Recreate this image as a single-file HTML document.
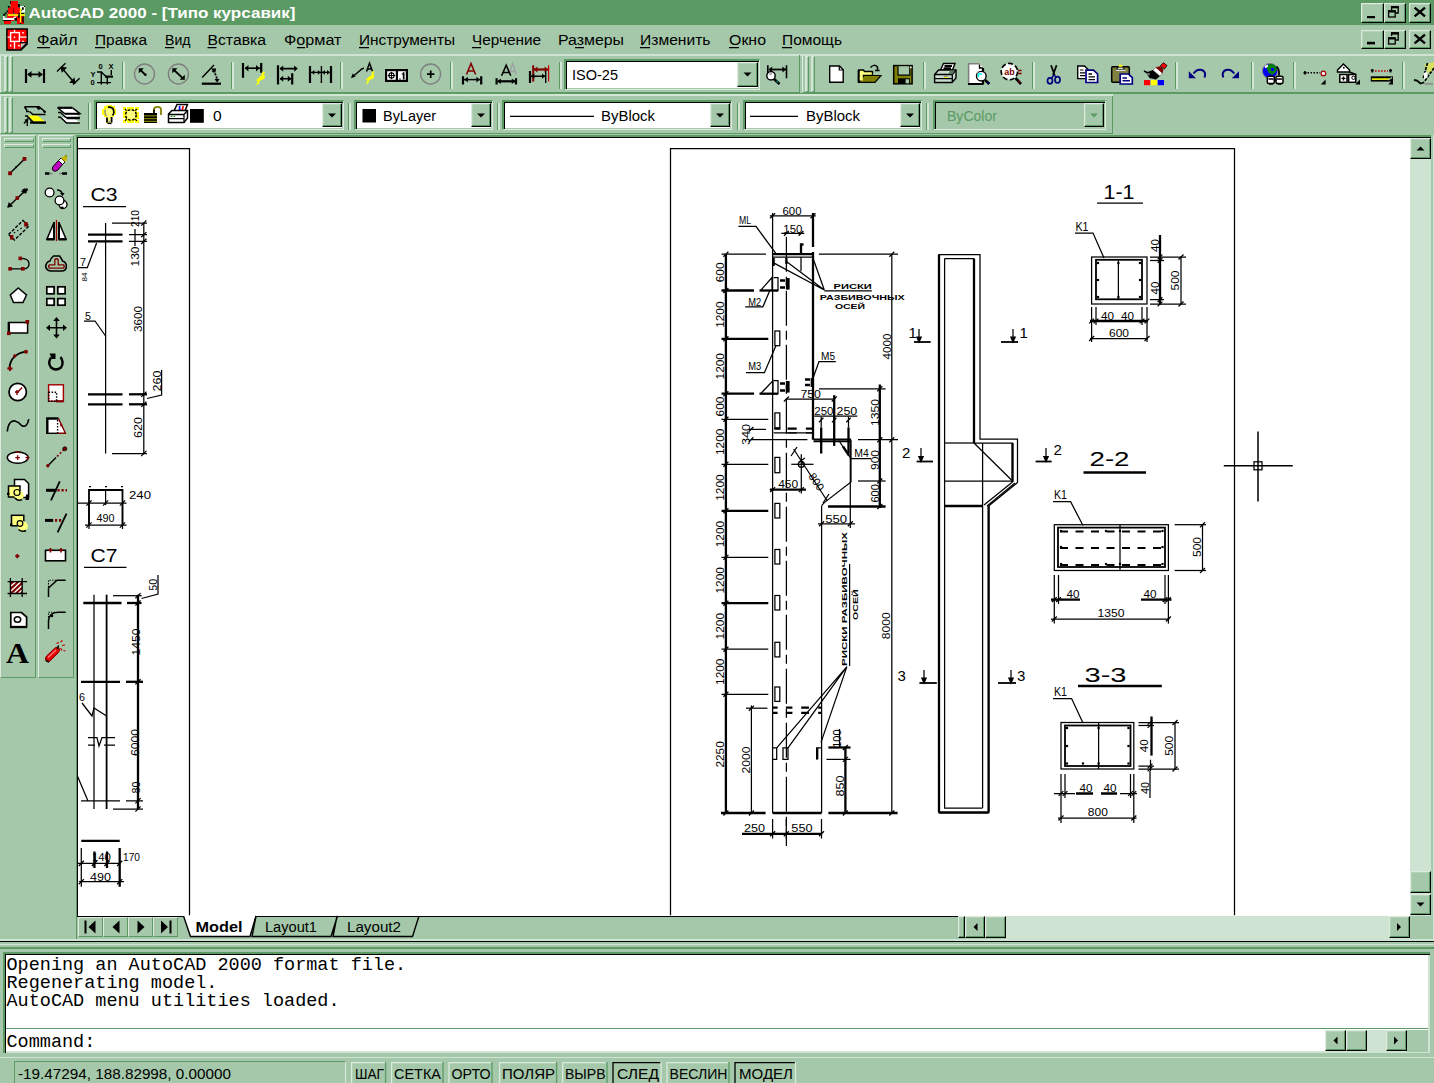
<!DOCTYPE html>
<html lang="ru">
<head>
<meta charset="utf-8">
<title>AutoCAD 2000 - [Типо курсавик]</title>
<style>
html,body{margin:0;padding:0}
body{width:1434px;height:1083px;overflow:hidden;position:relative;background:#a4c8a9;font-family:"Liberation Sans",sans-serif;font-size:15.5px;color:#000}
.abs{position:absolute}
.btn{position:absolute;background:#a4c8a9;box-sizing:border-box;border:1px solid;border-color:#dcebde #000 #000 #dcebde;box-shadow:inset -1px -1px 0 #5c9a64,inset 1px 1px 0 #b4d2b8}
.sunk{position:absolute;box-sizing:border-box;border:1px solid;border-width:2px 1px 1px 2px;border-color:#5c9a64 #dcebde #dcebde #5c9a64;box-shadow:inset 1px 1px 0 #000,inset -1px -1px 0 #a4c8a9}
.tb{position:absolute;box-sizing:border-box;border-top:1px solid #dcebde;border-left:1px solid #dcebde;border-bottom:1px solid #5c9a64;border-right:1px solid #5c9a64}
.grip{position:absolute;width:4px;box-sizing:border-box;border-left:2px solid #d3e6d6;border-top:1px solid #dcebde;border-right:1px solid #5c9a64;border-bottom:1px solid #5c9a64;background:#a4c8a9}
.hgrip{position:absolute;height:3px;box-sizing:border-box;border-left:1px solid #dcebde;border-top:1px solid #dcebde;border-right:1px solid #5c9a64;border-bottom:1px solid #5c9a64;background:#a4c8a9}
.sep{position:absolute;width:3px;box-sizing:border-box;border-left:1px solid #5c9a64;border-right:2px solid #d3e6d6}
svg{position:absolute;left:0;top:0;overflow:visible}
svg text{font-family:"Liberation Sans",sans-serif}
.ui text{font-size:15.5px;fill:#000}
.mono{font-family:"Liberation Mono",monospace;font-size:18.5px;line-height:18px;white-space:pre;color:#000}
</style>
</head>
<body>
<!-- title bar -->
<div class="abs" style="left:0;top:0;width:1434px;height:25px;background:#5b9a63"></div>
<div class="btn" style="left:1361px;top:3px;width:23px;height:20px"></div>
<div class="btn" style="left:1384px;top:3px;width:22px;height:20px"></div>
<div class="btn" style="left:1409px;top:3px;width:22px;height:20px"></div>
<div class="btn" style="left:1361px;top:30px;width:23px;height:19px"></div>
<div class="btn" style="left:1384px;top:30px;width:22px;height:19px"></div>
<div class="btn" style="left:1409px;top:30px;width:22px;height:19px"></div>
<!-- menu bottom edge -->
<div class="abs" style="left:0;top:54px;width:1434px;height:1.5px;background:#cfe3d2"></div>
<!-- toolbar row 1 -->
<div class="tb" style="left:0;top:55px;width:800px;height:38px;border-top:none"></div>
<div class="tb" style="left:802px;top:55px;width:640px;height:38px;border-top:none"></div>
<div class="abs" style="left:0;top:93px;width:1434px;height:1px;background:#5c9a64"></div>
<div class="abs" style="left:0;top:94px;width:1113px;height:2px;background:#d3e6d6"></div>
<!-- toolbar row 2 -->
<div class="tb" style="left:0;top:96px;width:1113px;height:38px;border-top:none"></div>
<div class="abs" style="left:0;top:134px;width:1434px;height:1px;background:#a4c8a9"></div>
<!-- grips -->
<div class="grip" style="left:4px;top:56px;height:36px"></div>
<div class="grip" style="left:9px;top:56px;height:36px"></div>
<div class="grip" style="left:805px;top:56px;height:36px"></div>
<div class="grip" style="left:810.500px;top:56px;height:36px"></div>
<div class="grip" style="left:4px;top:97px;height:36px"></div>
<div class="grip" style="left:9px;top:97px;height:36px"></div>
<!-- title + menu text -->
<svg class="ui" width="1434" height="56" viewBox="0 0 1434 56">
<text x="28.5" y="17.5" textLength="267" lengthAdjust="spacingAndGlyphs" style="font-weight:bold;fill:#fff;font-size:15.5px">AutoCAD 2000 - [Типо курсавик]</text>
<g id="menu">
<text x="37" y="45" textLength="40.5" lengthAdjust="spacingAndGlyphs">Файл</text>
<text x="95" y="45" textLength="52" lengthAdjust="spacingAndGlyphs">Правка</text>
<text x="165" y="45" textLength="25.5" lengthAdjust="spacingAndGlyphs">Вид</text>
<text x="207.5" y="45" textLength="58.5" lengthAdjust="spacingAndGlyphs">Вставка</text>
<text x="284" y="45" textLength="57.5" lengthAdjust="spacingAndGlyphs">Формат</text>
<text x="359" y="45" textLength="96" lengthAdjust="spacingAndGlyphs">Инструменты</text>
<text x="472" y="45" textLength="69" lengthAdjust="spacingAndGlyphs">Черчение</text>
<text x="558" y="45" textLength="66" lengthAdjust="spacingAndGlyphs">Размеры</text>
<text x="640" y="45" textLength="70.5" lengthAdjust="spacingAndGlyphs">Изменить</text>
<text x="729" y="45" textLength="37" lengthAdjust="spacingAndGlyphs">Окно</text>
<text x="782" y="45" textLength="60" lengthAdjust="spacingAndGlyphs">Помощь</text>
</g>
<g stroke="#000" stroke-width="1.2" fill="none">
<path d="M37 47.6h13M95 47.6h10M165 47.6h9M207.5 47.6h9M297 47.6h8M359 47.6h10M472 47.6h9M575 47.6h9M640 47.6h10M729 47.6h10M782 47.6h10"/>
</g>
</svg>
<!-- app icons -->
<svg width="40" height="56" viewBox="0 0 40 56">
<g>
<path d="M10.600 1H18V7.400H19.900V24H17V18H14.600V20.900H11V24H4V20.900H7.200V13.700H7.900V7.400H10.600Z" fill="#f00"/>
<path d="M14.600 18H17V24H14.600Z M11 20.900h3.600v3.100h-3.600z" fill="#5b9a63"/>
<path d="M10 1h0.900v2.800h-0.900zM7.900 6h1.800v1.700h-1.800zM6.500 10.500h1.400v1.800h-1.400zM4.600 12.500h2v1.400h-2zM3.100 14h2.200v1.800h-2.200zM18 4h1.900v3.300h-1.900z" fill="#000"/>
<rect x="13.200" y="8.400" width="0.700" height="4.800" fill="#400"/><rect x="13.200" y="13" width="1.600" height="0.900" fill="#08a"/>
<path d="M20.200 6H25V12.500H21.200V8.500H20.200Z" fill="#fff"/><path d="M22 7.200h1.800v2.600h-1.800zM24 6h1v0.900h-1zM21.200 9.800h1v1h-1z" fill="#000"/>
<rect x="19.900" y="15.800" width="4.100" height="8.200" fill="#f00"/>
<rect x="18.200" y="13" width="5.800" height="1.200" fill="#000"/>
<rect x="7.900" y="14.200" width="17.100" height="1.650" fill="#ff0"/>
<rect x="18.200" y="14.200" width="1.700" height="3.800" fill="#000"/><rect x="22.300" y="16.500" width="1.500" height="6.100" fill="#000"/>
<path d="M3.100 16H4.500V18H13L14.600 16.400H16.800L14 19.900H3.100Z" fill="#fff"/>
<path d="M3.100 19.900h7.900v1h-7.900zM14 18.200l3 -0.800v3.400h-1.800z" fill="#000"/>
<rect x="19.900" y="7.900" width="1.250" height="14.900" fill="#ff0"/><rect x="19.900" y="22.800" width="1.250" height="1.200" fill="#000"/>
<rect x="4.300" y="21.400" width="1.400" height="1.300" fill="#a00"/>
</g>
<g>
<path d="M6.9 28.9 H27.2 V44 L21 49.9 H6.9 Z" fill="#f00" stroke="#000" stroke-width="1.5"/>
<path d="M20.8 43.2 H27 L21 49 Z" fill="#c4c4c4"/>
<path d="M20.4 43.6 V42.6 H27.6" stroke="#000" stroke-width="1.4" fill="none"/>
<path d="M21 49 L26.6 43.6" stroke="#000" stroke-width="1.4"/>
<path d="M7.6 37.2 H26.6 M14.5 29.8 V48.8" stroke="#fff" stroke-width="1.3"/>
<rect x="10.6" y="32.6" width="8.8" height="8.8" fill="#f00" stroke="#fff" stroke-width="1.4"/>
<path d="M13.8 36.6h1.4v1.4h-1.4z M22.2 32h1.6v1.6h-1.6z M22.2 40.8h1.6v1.2h-1.6z M10 44.6h1.3v2h-1.3z M18.2 44.8h1.6v1.8h-1.6z" fill="#fff"/>
</g>
</svg>
<!-- caption button glyphs -->
<svg width="1434" height="56" viewBox="0 0 1434 56">
<g fill="#000">
<rect x="1367" y="16" width="8" height="2.2"/>
<rect x="1367" y="41.8" width="8" height="2.6"/>
</g>
<g fill="none" stroke="#000" stroke-width="1.3">
<path d="M1391.6 10 V6.8 H1398.2 V13 H1395.6"/><path d="M1391 7.2 H1398.8" stroke-width="2.2"/>
<rect x="1388.6" y="11" width="6.6" height="6"/><path d="M1388 11.4 H1395.8" stroke-width="2.2"/>
<path d="M1391.6 36 V32.8 H1398.2 V40 H1395.6"/><path d="M1391 33.4 H1398.8" stroke-width="2.4"/>
<rect x="1388.6" y="38" width="6.6" height="6"/><path d="M1388 38.4 H1395.8" stroke-width="2.2"/>
</g>
<g stroke="#000" stroke-width="2.4" fill="none">
<path d="M1414.6 7.6 L1425 16.4 M1425 7.6 L1414.6 16.4"/>
<path d="M1414.6 34.6 L1425 43.4 M1425 34.6 L1414.6 43.4"/>
</g>
</svg>
<!-- separators row1 -->
<div class="sep" style="left:122px;top:62px;height:27px"></div>
<div class="sep" style="left:231px;top:62px;height:27px"></div>
<div class="sep" style="left:340px;top:62px;height:27px"></div>
<div class="sep" style="left:450px;top:62px;height:27px"></div>
<div class="sep" style="left:559px;top:62px;height:27px"></div>
<div class="sep" style="left:923px;top:62px;height:27px"></div>
<div class="sep" style="left:1032px;top:62px;height:27px"></div>
<div class="sep" style="left:1175px;top:62px;height:27px"></div>
<div class="sep" style="left:1251px;top:62px;height:27px"></div>
<div class="sep" style="left:1293px;top:62px;height:27px"></div>
<div class="sep" style="left:1402px;top:62px;height:27px"></div>
<!-- separators row2 -->
<div class="sep" style="left:88px;top:103px;height:27px"></div>
<div class="sep" style="left:348px;top:103px;height:27px"></div>
<div class="sep" style="left:497px;top:103px;height:27px"></div>
<div class="sep" style="left:737px;top:103px;height:27px"></div>
<div class="sep" style="left:926px;top:103px;height:27px"></div>
<!-- combos -->
<div class="sunk" style="left:564px;top:59px;width:196px;height:31px;background:#fff"></div>
<div class="btn" style="left:737px;top:62px;width:21px;height:25px"></div>
<div class="sunk" style="left:94px;top:100px;width:250px;height:30px;background:#fff"></div>
<div class="btn" style="left:322px;top:103px;width:20px;height:24px"></div>
<div class="sunk" style="left:354px;top:100px;width:139px;height:30px;background:#fff"></div>
<div class="btn" style="left:471px;top:103px;width:20px;height:24px"></div>
<div class="sunk" style="left:502px;top:100px;width:230px;height:30px;background:#fff"></div>
<div class="btn" style="left:710px;top:103px;width:20px;height:24px"></div>
<div class="sunk" style="left:743px;top:100px;width:179px;height:30px;background:#fff"></div>
<div class="btn" style="left:900px;top:103px;width:20px;height:24px"></div>
<div class="sunk" style="left:933px;top:100px;width:173px;height:30px;background:#a4c8a9"></div>
<div class="btn" style="left:1084px;top:103px;width:20px;height:24px"></div>
<svg class="ui" width="1434" height="136" viewBox="0 0 1434 136">
<g fill="#000">
<path d="M743.5 72.5h8l-4 4z M328 113.5h8l-4 4z M477 113.5h8l-4 4z M716 113.5h8l-4 4z M906 113.5h8l-4 4z"/>
<path d="M1090 113.5h8l-4 4z" fill="#5c9a64"/>
</g>
<text x="572" y="80" textLength="46" lengthAdjust="spacingAndGlyphs">ISO-25</text>
<text x="213" y="121" >0</text>
<rect x="362.5" y="109" width="13.5" height="13.5" fill="#000"/>
<text x="383" y="121" textLength="53" lengthAdjust="spacingAndGlyphs">ByLayer</text>
<path d="M510 116.3H594 M750 116.3H798" stroke="#000" stroke-width="1.2"/>
<text x="601" y="121" textLength="54" lengthAdjust="spacingAndGlyphs">ByBlock</text>
<text x="806" y="121" textLength="54" lengthAdjust="spacingAndGlyphs">ByBlock</text>
<text x="947" y="121" textLength="50" lengthAdjust="spacingAndGlyphs" style="fill:#5c9a64">ByColor</text>
</svg>
<!-- left toolbars -->
<div class="tb" style="left:0;top:135px;width:36px;height:543px"></div>
<div class="tb" style="left:38px;top:135px;width:36px;height:543px"></div>
<div class="hgrip" style="left:4px;top:138px;width:30px;height:4px"></div>
<div class="hgrip" style="left:4px;top:144px;width:30px;height:4px"></div>
<div class="hgrip" style="left:42px;top:138px;width:29px;height:4px"></div>
<div class="hgrip" style="left:42px;top:144px;width:29px;height:4px"></div>
<!-- drawing area frame -->
<div class="abs" style="left:76px;top:135px;width:1356px;height:806px;background:#5c9a64"></div>
<div class="abs" style="left:77px;top:137px;width:1354px;height:780px;background:#000"></div>
<div class="abs" style="left:77px;top:917px;width:1354px;height:24px;background:#a4c8a9"></div>
<div class="abs" style="left:78px;top:138px;width:1332px;height:777.5px;background:#fff"></div>
<!-- vertical scrollbar -->
<div class="abs" style="left:1410px;top:138px;width:21px;height:778px;background:#cfe3d2"></div>
<div class="btn" style="left:1410px;top:138px;width:21px;height:21px"></div>
<div class="btn" style="left:1410px;top:871px;width:21px;height:22px"></div>
<div class="btn" style="left:1410px;top:894px;width:21px;height:21px"></div>
<!-- bottom strip: tabs + hscroll -->
<div class="abs" style="left:78px;top:916.5px;width:1353px;height:22.5px;background:#a4c8a9"></div>
<div class="abs" style="left:1006px;top:915.5px;width:404px;height:23px;background:#cfe3d2"></div>
<div class="abs" style="left:1410px;top:915.5px;width:22px;height:26px;background:#a4c8a9"></div>
<div class="abs" style="left:1431px;top:135px;width:3px;height:806px;background:#a4c8a9"></div>
<div class="abs" style="left:1432.5px;top:135px;width:1.5px;height:806px;background:#cfe3d2"></div>
<div class="btn" style="left:958px;top:916px;width:7px;height:22px"></div>
<div class="btn" style="left:965px;top:916px;width:20px;height:22px"></div>
<div class="btn" style="left:985px;top:916px;width:21px;height:22px"></div>
<div class="btn" style="left:1389px;top:916px;width:21px;height:22px"></div>
<div class="btn" style="left:78px;top:917px;width:25px;height:20px;border-color:#dcebde #5c9a64 #5c9a64 #dcebde;box-shadow:none"></div>
<div class="btn" style="left:103px;top:917px;width:25px;height:20px;border-color:#dcebde #5c9a64 #5c9a64 #dcebde;box-shadow:none"></div>
<div class="btn" style="left:128px;top:917px;width:25px;height:20px;border-color:#dcebde #5c9a64 #5c9a64 #dcebde;box-shadow:none"></div>
<div class="btn" style="left:153px;top:917px;width:25px;height:20px;border-color:#dcebde #5c9a64 #5c9a64 #dcebde;box-shadow:none"></div>
<!-- splitter -->
<div class="abs" style="left:0;top:939px;width:1434px;height:2.5px;background:#cfe3d2"></div>
<div class="abs" style="left:0;top:941.3px;width:1434px;height:1.2px;background:#000"></div>
<div class="abs" style="left:0;top:942.5px;width:1434px;height:4.5px;background:#a4c8a9"></div>
<div class="abs" style="left:0;top:943.5px;width:1434px;height:1.5px;background:#cfe3d2"></div>
<div class="abs" style="left:0;top:947px;width:1434px;height:1.5px;background:#5c9a64"></div>
<div class="abs" style="left:0;top:948.5px;width:1434px;height:3.5px;background:#a4c8a9"></div>
<!-- command window -->
<div class="abs" style="left:3px;top:952px;width:1427px;height:101px;background:#5c9a64"></div>
<div class="abs" style="left:4.5px;top:953.5px;width:1425.5px;height:99.5px;background:#000"></div>
<div class="abs" style="left:6px;top:955px;width:1424px;height:98px;background:#cfe3d2"></div>
<div class="abs" style="left:6px;top:955px;width:1422px;height:96px;background:#fff"></div>
<div class="abs" style="left:6px;top:1027.5px;width:1422px;height:1.3px;background:#5c9a64"></div>
<div class="abs mono" style="left:6.5px;top:957px">Opening an AutoCAD 2000 format file.
Regenerating model.
AutoCAD menu utilities loaded.</div>
<div class="abs mono" style="left:6.5px;top:1034px">Command:</div>
<!-- command hscroll -->
<div class="abs" style="left:1325px;top:1030px;width:82px;height:21.5px;background:#cfe3d2"></div>
<div class="abs" style="left:1407px;top:1030px;width:21px;height:21.5px;background:#a4c8a9"></div>
<div class="btn" style="left:1325px;top:1030px;width:21px;height:21px"></div>
<div class="btn" style="left:1346px;top:1030px;width:21px;height:21px"></div>
<div class="btn" style="left:1386px;top:1030px;width:21px;height:21px"></div>
<!-- status bar -->
<div class="abs" style="left:0;top:1056.5px;width:1434px;height:1.5px;background:#cfe3d2"></div>
<div class="abs" style="left:14px;top:1061px;width:332px;height:24px;box-sizing:border-box;border:1.3px solid;border-color:#5c9a64 #dcebde #dcebde #5c9a64"></div>
<!-- tabs, scroll arrows -->
<svg class="ui" width="1434" height="1083" viewBox="0 0 1434 1083">
<g fill="#000">
<path d="M84.5 920.5h2v13h-2z M95.5 920.5v13l-7 -6.5z"/>
<path d="M119.5 920.5v13l-7 -6.5z"/>
<path d="M137.5 920.5v13l7 -6.5z"/>
<path d="M161 920.5v13l7 -6.5z M169.5 920.5h2v13h-2z"/>
<path d="M1416.500 150.500h8l-4 -4z M1416.500 902.500h8l-4 4z"/>
<path d="M977.5 923v8l-4 -4z M1397 923v8l4 -4z M1337.500 1036.500v8l-4 -4z M1394 1036.500v8l4 -4z"/>
</g>
<!-- model tab -->
<path d="M183 916 L190.500 936.500 H250 L255.500 916 Z" fill="#fff"/>
<path d="M183.500 916 L190.500 936.500 H250 L256 916" fill="none" stroke="#000" stroke-width="1.4"/>
<path d="M256 916 L252 936.500 H331 L337.500 916 M337 916 L333 936.500 H412.500 L419 916" fill="none" stroke="#000" stroke-width="1.4"/>
<text x="195.500" y="932" textLength="47" lengthAdjust="spacingAndGlyphs" style="font-weight:bold">Model</text>
<text x="265" y="932" textLength="52" lengthAdjust="spacingAndGlyphs">Layout1</text>
<text x="347" y="932" textLength="54" lengthAdjust="spacingAndGlyphs">Layout2</text>
</svg>
<!-- drawing -->
<svg id="dwg" width="1434" height="1083" viewBox="0 0 1434 1083" style="clip-path:inset(138px 24px 167.5px 78px)">
<style>#dwg .t{stroke:#000;stroke-width:1.25;fill:none}#dwg .k{stroke:#000;stroke-width:2.3;fill:none}#dwg .m{stroke:#000;stroke-width:1.8;fill:none}#dwg .w{stroke:#000;stroke-width:1.25;fill:#fff}#dwg text{fill:#000;font-family:"Liberation Sans",sans-serif}</style>
<path class="t" d="M670.5 915.5V148.5H1234.5V915.5"/>
<path class="t" d="M78 148.5H189.5V915.5"/>
<text x="90.5" y="201" font-size="19" textLength="27" lengthAdjust="spacingAndGlyphs">C3</text>
<path class="t" d="M83 206.5L126 206.5"/>
<path class="t" d="M105.6 223L105.6 453.5"/>
<path class="t" d="M112 223L147 223"/>
<path class="k" d="M88 234.7L122.5 234.7"/>
<path class="k" d="M88 241.4L122.5 241.4"/>
<path class="t" d="M143.8 223L143.8 453.5"/>
<path class="t" d="M141.2 225.6L146.4 220.4"/>
<path class="t" d="M141.2 237.3L146.4 232.1"/>
<path class="t" d="M141.2 244L146.4 238.8"/>
<path class="t" d="M141.2 396.9L146.4 391.7"/>
<path class="t" d="M141.2 406.9L146.4 401.7"/>
<path class="t" d="M141.2 456.1L146.4 450.9"/>
<path class="t" d="M129 234.7L147 234.7"/>
<path class="t" d="M129 241.4L147 241.4"/>
<text x="139" y="227" font-size="10.5" textLength="17" lengthAdjust="spacingAndGlyphs" transform="rotate(-90 139 227)">210</text>
<text x="139" y="266.5" font-size="10.5" textLength="20" lengthAdjust="spacingAndGlyphs" transform="rotate(-90 139 266.5)">130</text>
<path class="t" d="M135 229L135 246"/>
<path class="t" d="M96.6 243L87.3 267.7H78"/>
<text x="80" y="266" font-size="10.5" textLength="6" lengthAdjust="spacingAndGlyphs">7</text>
<text x="87" y="281.5" font-size="8" textLength="9" lengthAdjust="spacingAndGlyphs" transform="rotate(-90 87 281.5)">84</text>
<text x="85" y="320" font-size="10.5" textLength="6" lengthAdjust="spacingAndGlyphs">5</text>
<path class="t" d="M84 321H95L105.6 336"/>
<text x="141.5" y="332" font-size="10.5" textLength="26" lengthAdjust="spacingAndGlyphs" transform="rotate(-90 141.5 332)">3600</text>
<path class="k" d="M88 394.3L122.5 394.3"/>
<path class="k" d="M88 404.3L122.5 404.3"/>
<path class="k" d="M129 394.3L147 394.3"/>
<path class="k" d="M129 404.3L147 404.3"/>
<text x="160.5" y="391.5" font-size="10.5" textLength="21" lengthAdjust="spacingAndGlyphs" transform="rotate(-90 160.5 391.5)">260</text>
<path class="t" d="M161.6 370V395L147 398.5"/>
<text x="141.5" y="438" font-size="10.5" textLength="21" lengthAdjust="spacingAndGlyphs" transform="rotate(-90 141.5 438)">620</text>
<path class="t" d="M112 453.5L147 453.5"/>
<path class="m" d="M89 525V490H122.5V525"/>
<path class="t" d="M105.6 490L105.6 505"/>
<path class="t" d="M78 503L126.5 503"/>
<path class="t" d="M85 525L126.5 525"/>
<path class="t" d="M86.4 505.6L91.6 500.4"/>
<path class="t" d="M103 505.6L108.2 500.4"/>
<path class="t" d="M119.9 505.6L125.1 500.4"/>
<path class="t" d="M86.4 527.6L91.6 522.4"/>
<path class="t" d="M119.9 527.6L125.1 522.4"/>
<text x="129" y="499" font-size="11" textLength="22" lengthAdjust="spacingAndGlyphs">240</text>
<text x="96.6" y="522" font-size="10" textLength="18" lengthAdjust="spacingAndGlyphs">490</text>
<path class="t" d="M89 486.5L91 486.5"/>
<path class="t" d="M105 486.5L107 486.5"/>
<path class="t" d="M121 486.5L123 486.5"/>
<path class="t" d="M89 503L89 529"/>
<path class="t" d="M122.5 503L122.5 529"/>
<text x="90.5" y="562" font-size="19" textLength="27" lengthAdjust="spacingAndGlyphs">C7</text>
<path class="t" d="M84 567.4L126.5 567.4"/>
<path class="t" d="M94 594.7L94 809"/>
<path class="m" d="M106.6 594.7L106.6 809"/>
<path class="k" d="M138 594.7L138 809"/>
<path class="t" d="M113 595.7L141.7 595.7"/>
<path class="k" d="M83.3 603L121.5 603"/>
<path class="k" d="M127 603L141.5 603"/>
<text x="157" y="590.7" font-size="10.5" textLength="12" lengthAdjust="spacingAndGlyphs" transform="rotate(-90 157 590.7)">50</text>
<path class="t" d="M158 575V594L141.500 598.5"/>
<text x="139.5" y="655.5" font-size="10.5" textLength="27" lengthAdjust="spacingAndGlyphs" transform="rotate(-90 139.5 655.5)">1450</text>
<path class="k" d="M81 681.8L120 681.8"/>
<path class="k" d="M126 681.8L143 681.8"/>
<text x="79" y="701" font-size="10.5" textLength="6" lengthAdjust="spacingAndGlyphs">6</text>
<path class="t" d="M82 703L92 716L94 708L106.6 716"/>
<path class="t" d="M88 737.6H97L99 746L102 737.6H115"/>
<path class="t" d="M88 745H95M104 745H115"/>
<text x="139.5" y="756.1" font-size="10.5" textLength="27" lengthAdjust="spacingAndGlyphs" transform="rotate(-90 139.5 756.1)">6000</text>
<text x="139.5" y="793.5" font-size="10.5" textLength="12" lengthAdjust="spacingAndGlyphs" transform="rotate(-90 139.5 793.5)">80</text>
<path class="t" d="M81 800.8L120 800.8"/>
<path class="t" d="M126 800.8L143 800.8"/>
<path class="t" d="M113 809L143 809"/>
<path class="t" d="M77 775L88 801"/>
<path class="t" d="M135.4 598.3L140.6 593.1"/>
<path class="t" d="M135.4 605.6L140.6 600.4"/>
<path class="t" d="M135.4 684.4L140.6 679.2"/>
<path class="t" d="M135.4 803.4L140.6 798.2"/>
<path class="t" d="M135.4 811.6L140.6 806.4"/>
<path class="k" d="M81.3 840.8L119.7 840.8"/>
<path class="k" d="M94.4 851.5L94.4 868"/>
<path class="k" d="M107 851.5L107 868"/>
<text x="91.9" y="861" font-size="10.5" textLength="19" lengthAdjust="spacingAndGlyphs">140</text>
<text x="123" y="861" font-size="10.5" textLength="17" lengthAdjust="spacingAndGlyphs">170</text>
<path class="t" d="M78 863.4L119.7 863.4"/>
<text x="90.1" y="881" font-size="10.5" textLength="21" lengthAdjust="spacingAndGlyphs">490</text>
<path class="t" d="M79 881.7L124 881.7"/>
<path class="t" d="M81.3 848L81.3 886.7"/>
<path class="k" d="M119.7 848L119.7 886.7"/>
<path class="t" d="M78.7 866L83.9 860.8"/>
<path class="t" d="M91.8 866L97 860.8"/>
<path class="t" d="M104.4 866L109.6 860.8"/>
<path class="t" d="M117.1 866L122.3 860.8"/>
<path class="t" d="M78.7 884.3L83.9 879.1"/>
<path class="t" d="M117.1 884.3L122.3 879.1"/>
<path class="k" d="M725.9 254.2L725.9 813"/>
<path class="t" d="M723.4 256.7L728.4 251.7"/>
<path class="t" d="M723.4 293L728.4 288"/>
<path class="t" d="M723.4 341.3L728.4 336.3"/>
<path class="t" d="M723.4 396.2L728.4 391.2"/>
<path class="t" d="M723.4 421.8L728.4 416.8"/>
<path class="t" d="M723.4 466.8L728.4 461.8"/>
<path class="t" d="M723.4 513.3L728.4 508.3"/>
<path class="t" d="M723.4 559.9L728.4 554.9"/>
<path class="t" d="M723.4 605.7L728.4 600.7"/>
<path class="t" d="M723.4 651.7L728.4 646.7"/>
<path class="t" d="M723.4 696.8L728.4 691.8"/>
<path class="t" d="M723.4 815.5L728.4 810.5"/>
<path class="t" d="M721.5 254.2L766 254.2"/>
<path class="k" d="M721.5 290.5L754 290.5"/>
<path class="k" d="M721.5 338.8L768.3 338.8"/>
<path class="k" d="M721.5 393.7L754 393.7"/>
<path class="t" d="M721.5 419.3L768.3 419.3"/>
<path class="t" d="M721.5 464.3L768.3 464.3"/>
<path class="k" d="M721.5 510.8L768.3 510.8"/>
<path class="t" d="M721.5 557.4L768.3 557.4"/>
<path class="k" d="M721.5 603.2L768.3 603.2"/>
<path class="t" d="M721.5 649.2L768.3 649.2"/>
<path class="t" d="M721.5 694.3L768.3 694.3"/>
<text x="724" y="282.25" font-size="11.5" textLength="19.8" lengthAdjust="spacingAndGlyphs" transform="rotate(-90 724 282.25)">600</text>
<text x="724" y="327.85" font-size="11.5" textLength="26.4" lengthAdjust="spacingAndGlyphs" transform="rotate(-90 724 327.85)">1200</text>
<text x="724" y="379.45" font-size="11.5" textLength="26.4" lengthAdjust="spacingAndGlyphs" transform="rotate(-90 724 379.45)">1200</text>
<text x="724" y="416.4" font-size="11.5" textLength="19.8" lengthAdjust="spacingAndGlyphs" transform="rotate(-90 724 416.4)">600</text>
<text x="724" y="455" font-size="11.5" textLength="26.4" lengthAdjust="spacingAndGlyphs" transform="rotate(-90 724 455)">1200</text>
<text x="724" y="500.75" font-size="11.5" textLength="26.4" lengthAdjust="spacingAndGlyphs" transform="rotate(-90 724 500.75)">1200</text>
<text x="724" y="547.3" font-size="11.5" textLength="26.4" lengthAdjust="spacingAndGlyphs" transform="rotate(-90 724 547.3)">1200</text>
<text x="724" y="593.5" font-size="11.5" textLength="26.4" lengthAdjust="spacingAndGlyphs" transform="rotate(-90 724 593.5)">1200</text>
<text x="724" y="639.4" font-size="11.5" textLength="26.4" lengthAdjust="spacingAndGlyphs" transform="rotate(-90 724 639.4)">1200</text>
<text x="724" y="684.95" font-size="11.5" textLength="26.4" lengthAdjust="spacingAndGlyphs" transform="rotate(-90 724 684.95)">1200</text>
<text x="724" y="767.6" font-size="11.5" textLength="26.4" lengthAdjust="spacingAndGlyphs" transform="rotate(-90 724 767.6)">2250</text>
<path class="t" d="M769.8 215.8L815.8 215.8"/>
<path class="t" d="M770.1 218.3L775.1 213.3"/>
<path class="t" d="M810.5 218.3L815.5 213.3"/>
<text x="782.5" y="215.3" font-size="11.5" textLength="19" lengthAdjust="spacingAndGlyphs">600</text>
<path class="t" d="M781.3 233.4L804.3 233.4"/>
<path class="t" d="M784 235.8L788.8 231"/>
<path class="t" d="M798.6 235.8L803.4 231"/>
<text x="783.3" y="232.6" font-size="11.5" textLength="19" lengthAdjust="spacingAndGlyphs">150</text>
<path class="t" d="M772.6 213L772.6 813"/>
<path class="k" d="M813 213V247M813 252V439.7"/>
<path class="k" d="M772.6 254.2L813 254.2"/>
<path class="t" d="M772.6 257L813 257"/>
<path class="k" d="M803.5 244.5H801V253.7"/>
<path class="t" d="M801 257L801 271.3"/>
<path class="t" d="M786.4 236.8V846" stroke-dasharray="35 5 9 5"/>
<text x="739" y="223.8" font-size="11.5" textLength="12" lengthAdjust="spacingAndGlyphs">ML</text>
<path class="t" d="M738.4 226.4H756L776 253.7"/>
<path class="t" d="M824.3 290L813 258.3M824.3 290L773.6 262.9M824.3 290L786.4 261.4M824.3 290.8H871.8"/>
<path class="k" d="M773.6 258L773.6 266"/>
<path class="k" d="M786.4 258L786.4 264"/>
<text x="833.5" y="289.4" font-size="8" textLength="38.3" lengthAdjust="spacingAndGlyphs" font-weight="bold">РИСКИ</text>
<text x="819.7" y="299.7" font-size="8" textLength="85" lengthAdjust="spacingAndGlyphs" font-weight="bold">РАЗБИВОЧНЫХ</text>
<text x="835" y="309.2" font-size="8" textLength="30" lengthAdjust="spacingAndGlyphs" font-weight="bold">ОСЕЙ</text>
<path class="t" d="M760.6 290.5L772 277.5V290.5"/>
<path class="k" d="M759.5 290.5L778 290.5"/>
<path class="t" d="M773.6 277.5H778V290.5H773.6"/>
<path class="k" d="M780 280.5H785M780 287.5H785"/>
<path class="k" d="M788.5 278V289.5"/>
<path class="k" d="M787 278L787 289.5"/>
<text x="748.3" y="305.6" font-size="11.5" textLength="13" lengthAdjust="spacingAndGlyphs">M2</text>
<path class="t" d="M745.3 306.8H762.9L769.8 290.5"/>
<text x="748.3" y="370" font-size="11.5" textLength="13" lengthAdjust="spacingAndGlyphs">M3</text>
<path class="t" d="M746 372.7H764.4L776 345.4"/>
<path class="t" d="M760.6 393.7L772.9 380.7V393.7"/>
<path class="k" d="M759.5 393.7L778 393.7"/>
<path class="t" d="M773.6 380.7H778V393.7H773.6"/>
<path class="k" d="M780 383.5H785M780 390.5H785"/>
<path class="k" d="M788.5 381V392.5"/>
<path class="k" d="M787 381L787 392.5"/>
<text x="821" y="359.6" font-size="11.5" textLength="14" lengthAdjust="spacingAndGlyphs">M5</text>
<path class="t" d="M835.8 361.5H819L813.5 376.8"/>
<path class="k" d="M805 379.5H810M805 385H810"/>
<path class="k" d="M811.8 378L811.8 387"/>
<rect class="t" x="774.9" y="331" width="4.9" height="14.7"/>
<rect class="t" x="774.9" y="412.9" width="4.9" height="16.1"/>
<rect class="t" x="774.9" y="457.4" width="4.9" height="15.3"/>
<rect class="t" x="774.9" y="503.4" width="4.9" height="14.6"/>
<rect class="t" x="774.9" y="549.5" width="4.9" height="14.5"/>
<rect class="t" x="774.9" y="595.5" width="4.9" height="14.5"/>
<rect class="t" x="774.9" y="642.3" width="4.9" height="14.6"/>
<rect class="t" x="774.9" y="687" width="4.9" height="14.4"/>
<path class="k" d="M774.5 428.3L780.2 428.3"/>
<path class="t" d="M818.9 254.2L898 254.2"/>
<path class="t" d="M891.8 254.2L891.8 813"/>
<path class="t" d="M889.3 256.7L894.3 251.7"/>
<path class="t" d="M889.3 442.2L894.3 437.2"/>
<path class="t" d="M889.3 815.5L894.3 810.5"/>
<text x="890.5" y="359.5" font-size="11.5" textLength="26" lengthAdjust="spacingAndGlyphs" transform="rotate(-90 890.5 359.5)">4000</text>
<text x="890.5" y="639.3" font-size="11.5" textLength="27" lengthAdjust="spacingAndGlyphs" transform="rotate(-90 890.5 639.3)">8000</text>
<path class="t" d="M819 388.8L885.6 388.8"/>
<path class="k" d="M879.8 384.5L879.8 508"/>
<path class="t" d="M877.3 391.3L882.3 386.3"/>
<path class="t" d="M877.3 442.2L882.3 437.2"/>
<path class="t" d="M877.3 483.5L882.3 478.5"/>
<path class="t" d="M877.3 509L882.3 504"/>
<text x="878.8" y="426" font-size="11.5" textLength="27" lengthAdjust="spacingAndGlyphs" transform="rotate(-90 878.8 426)">1350</text>
<text x="878.8" y="470" font-size="11.5" textLength="20" lengthAdjust="spacingAndGlyphs" transform="rotate(-90 878.8 470)">900</text>
<text x="878.8" y="502.55" font-size="11.5" textLength="18.5" lengthAdjust="spacingAndGlyphs" transform="rotate(-90 878.8 502.55)">600</text>
<path class="t" d="M858 439.7L898 439.7"/>
<path class="t" d="M858 481L885.6 481"/>
<path class="k" d="M828 506.5L885.6 506.5"/>
<path class="t" d="M786 399L833.5 399"/>
<path class="t" d="M783.9 401.5L788.9 396.5"/>
<path class="t" d="M831.7 401.5L836.7 396.5"/>
<text x="800.45" y="398.3" font-size="11.5" textLength="20.5" lengthAdjust="spacingAndGlyphs">750</text>
<path class="t" d="M814.3 416L857.3 416"/>
<text x="814.3" y="415.2" font-size="11.5" textLength="19.2" lengthAdjust="spacingAndGlyphs">250</text>
<text x="836.5" y="415.2" font-size="11.5" textLength="20.8" lengthAdjust="spacingAndGlyphs">250</text>
<path class="t" d="M819 422.2L823.4 417.8"/>
<path class="t" d="M832 422.2L836.4 417.8"/>
<path class="t" d="M846.3 422.2L850.7 417.8"/>
<path class="t" d="M821.2 416.7V427.5M848.5 416.7V427.5"/>
<path class="k" d="M821.2 427.5V453.5M848.5 427.5V453.5"/>
<path class="k" d="M834.2 395.2L834.2 445.9"/>
<path class="t" d="M750.6 439.7L807.4 439.7"/>
<path class="k" d="M813.5 439.7L851 439.7"/>
<path class="t" d="M813.5 441.6L851 441.6"/>
<path class="t" d="M851 439.7V481.9L824.3 502.6L821.6 505.7"/>
<path class="t" d="M821.6 505.7L821.6 813"/>
<text x="749.5" y="445" font-size="11.5" textLength="21" lengthAdjust="spacingAndGlyphs" transform="rotate(-90 749.5 445)">340</text>
<path class="t" d="M749 429.4L766 429.4"/>
<path class="t" d="M748.6 431.8L753.4 427"/>
<path class="t" d="M748.6 442.1L753.4 437.3"/>
<path class="k" d="M787.5 428.7H796.7M805.9 428.7H812.8"/>
<path class="t" d="M773.6 432.8H812.8"/>
<path class="t" d="M787.5 432.8H796.7M805.9 432.8H812.8"/>
<path class="t" d="M838.8 440.5L851 458.6H871"/>
<text x="854.2" y="456.6" font-size="11.5" textLength="14.5" lengthAdjust="spacingAndGlyphs">M4</text>
<path class="k" d="M843 446.5L849 455.5"/>
<path class="t" d="M793.6 449L827.3 501"/>
<text x="808" y="476" font-size="11" textLength="19" lengthAdjust="spacingAndGlyphs" transform="rotate(57 808 476)">800</text>
<path class="t" d="M797 447L791 456M829 494L823 503M799 462L805 458"/>
<path class="t" d="M791.3 464.3L813.5 464.3"/>
<path class="t" d="M801.3 454.3L801.3 493.4"/>
<circle class="t" cx="801.300" cy="464.300" r="3"/>
<path class="k" d="M769.8 489.6L805.9 489.6"/>
<path class="t" d="M770.1 492.1L775.1 487.1"/>
<path class="t" d="M798.8 492.1L803.8 487.1"/>
<text x="778.2" y="488" font-size="11.5" textLength="20" lengthAdjust="spacingAndGlyphs">450</text>
<path class="t" d="M818 523.8L855 523.8"/>
<path class="t" d="M819.1 526.3L824.1 521.3"/>
<path class="t" d="M847.8 526.3L852.8 521.3"/>
<text x="825.2" y="522.6" font-size="11.5" textLength="22" lengthAdjust="spacingAndGlyphs">550</text>
<path class="t" d="M850.3 441.6L850.3 528"/>
<text x="847.3" y="666" font-size="8" textLength="134" lengthAdjust="spacingAndGlyphs" transform="rotate(-90 847.3 666)" font-weight="bold">РИСКИ РАЗБИВОЧНЫХ</text>
<text x="858" y="620" font-size="8" textLength="30.6" lengthAdjust="spacingAndGlyphs" transform="rotate(-90 858 620)" font-weight="bold">ОСЕЙ</text>
<path class="t" d="M849.6 564L849.6 666"/>
<path class="t" d="M846.9 666.6L776.7 747.9M846.9 666.6L788 747.9M846.9 666.6L821 742.4"/>
<path class="t" d="M772.6 747.9H776.7V759.4H772.6"/>
<path class="t" d="M783 747.9H788V759.4H783Z"/>
<path class="t" d="M816.7 759.4V747.9H821.5"/>
<path class="k" d="M817.2 747.9L817.2 759.4"/>
<path class="k" d="M772.6 707.6H777.6M785.9 707.6H792.4M801.2 707.6H809M818.2 707.6H821.5"/>
<path class="k" d="M772.6 712.8H777.6M785.9 712.8H792.4M801.2 712.8H809M818.2 712.8H821.5"/>
<path class="t" d="M751.4 705.4L751.4 813"/>
<path class="t" d="M746 708.2L767.4 708.2"/>
<path class="t" d="M748.9 710.7L753.9 705.7"/>
<path class="t" d="M748.9 815.5L753.9 810.5"/>
<text x="750" y="773.5" font-size="11.5" textLength="27" lengthAdjust="spacingAndGlyphs" transform="rotate(-90 750 773.5)">2000</text>
<path class="k" d="M721 813L765.6 813"/>
<path class="k" d="M772.6 813L821.6 813"/>
<path class="k" d="M828.4 813L897.6 813"/>
<path class="k" d="M845.4 747L845.4 813"/>
<path class="k" d="M828.4 747.5L850.5 747.5"/>
<path class="t" d="M826.5 759.4L850.5 759.4"/>
<path class="t" d="M842.9 750L847.9 745"/>
<path class="t" d="M842.9 761.9L847.9 756.9"/>
<path class="t" d="M842.9 815.5L847.9 810.5"/>
<text x="841.3" y="747.85" font-size="11.5" textLength="18.5" lengthAdjust="spacingAndGlyphs" transform="rotate(-90 841.3 747.85)">100</text>
<text x="844" y="796.5" font-size="11.5" textLength="21" lengthAdjust="spacingAndGlyphs" transform="rotate(-90 844 796.5)">850</text>
<path class="t" d="M839.5 729L839.5 748"/>
<path class="k" d="M742 833.8L822 833.8"/>
<path class="t" d="M772.6 819L772.6 838.4"/>
<path class="t" d="M770.1 836.3L775.1 831.3"/>
<path class="t" d="M786.3 819L786.3 838.4"/>
<path class="t" d="M783.8 836.3L788.8 831.3"/>
<path class="t" d="M821.5 819L821.5 838.4"/>
<path class="t" d="M819 836.3L824 831.3"/>
<text x="744" y="832" font-size="11.5" textLength="21" lengthAdjust="spacingAndGlyphs">250</text>
<text x="791.35" y="832" font-size="11.5" textLength="21.3" lengthAdjust="spacingAndGlyphs">550</text>
<text x="908.5" y="337.5" font-size="15">1</text>
<path class="m" d="M914 342L930.7 342"/>
<path class="t" d="M919 329L919 342"/>
<path class="t" style="fill:#000" d="M916.8 337L919 342L921.2 337Z"/>
<text x="1019.5" y="337.5" font-size="15">1</text>
<path class="m" d="M1001 342L1018 342"/>
<path class="t" d="M1013 329L1013 342"/>
<path class="t" style="fill:#000" d="M1010.8 337L1013 342L1015.2 337Z"/>
<text x="902" y="457.5" font-size="15">2</text>
<path class="m" d="M916.6 461.5L933 461.5"/>
<path class="t" d="M921 448L921 461.5"/>
<path class="t" style="fill:#000" d="M918.8 456.5L921 461.5L923.2 456.5Z"/>
<text x="1053.5" y="455" font-size="15">2</text>
<path class="m" d="M1035.6 461.5L1051.6 461.5"/>
<path class="t" d="M1046 448L1046 461.5"/>
<path class="t" style="fill:#000" d="M1043.8 456.5L1046 461.5L1048.2 456.5Z"/>
<text x="897.5" y="680.5" font-size="15">3</text>
<path class="m" d="M919.4 683L936.8 683"/>
<path class="t" d="M924 670L924 683"/>
<path class="t" style="fill:#000" d="M921.8 678L924 683L926.2 678Z"/>
<text x="1017" y="680.5" font-size="15">3</text>
<path class="m" d="M998 683L1016 683"/>
<path class="t" d="M1011 670L1011 683"/>
<path class="t" style="fill:#000" d="M1008.8 678L1011 683L1013.2 678Z"/>
<path class="t" d="M939 254.7H980V439H1017.5V482.5L988.6 506V812.5H939Z"/>
<path class="t" d="M944.6 258.5H974M944.6 258.5V808H982.6"/>
<path class="k" d="M974 258.5L974 443"/>
<path class="t" d="M974 443H1012.5V481"/>
<path class="k" d="M1012.5 443L1012.5 482"/>
<path class="t" d="M944.6 443L974 443"/>
<path class="t" d="M944.6 481L1012.5 481"/>
<path class="t" d="M974 443L1012.5 481"/>
<path class="t" d="M982.6 443L982.6 808"/>
<path class="k" d="M944.6 506L982.6 506"/>
<path class="t" d="M1012.5 482L984 505M1015 483L987 506"/>
<path class="k" d="M939 812.5L988.6 812.5"/>
<path class="k" d="M939 254.7L939 812.5"/>
<path class="k" d="M988.6 506L988.6 812.5"/>
<text x="1103.5" y="198.5" font-size="20" textLength="31" lengthAdjust="spacingAndGlyphs">1-1</text>
<path class="t" d="M1097 203L1143 203"/>
<text x="1075.5" y="230.7" font-size="12.5" textLength="13" lengthAdjust="spacingAndGlyphs">K1</text>
<path class="t" d="M1075 233H1093L1104 258"/>
<rect class="t" x="1091.6" y="257" width="55.4" height="47"/>
<rect class="m" x="1096" y="259.800" width="46" height="39.500"/>
<path class="t" d="M1118.4 260L1118.4 300"/>
<rect x="1096.9" y="261.9" width="2.2" height="2.2"/>
<rect x="1138.9" y="261.9" width="2.2" height="2.2"/>
<rect x="1096.9" y="278.9" width="2.2" height="2.2"/>
<rect x="1138.9" y="278.9" width="2.2" height="2.2"/>
<rect x="1096.9" y="295.9" width="2.2" height="2.2"/>
<rect x="1138.9" y="295.9" width="2.2" height="2.2"/>
<rect x="1117.3" y="261.9" width="2.2" height="2.2"/>
<rect x="1117.3" y="295.9" width="2.2" height="2.2"/>
<path class="k" d="M1160 235L1160 304.6"/>
<path class="t" d="M1150 257L1186 257"/>
<path class="t" d="M1150 304L1186 304"/>
<path class="t" d="M1150 260.5L1164 260.5"/>
<path class="t" d="M1150 299.6L1164 299.6"/>
<path class="t" d="M1157.6 259.4L1162.4 254.6"/>
<path class="t" d="M1157.6 262.9L1162.4 258.1"/>
<path class="t" d="M1157.6 302L1162.4 297.2"/>
<path class="t" d="M1157.6 306.4L1162.4 301.6"/>
<text x="1158.5" y="252" font-size="11.5" textLength="13" lengthAdjust="spacingAndGlyphs" transform="rotate(-90 1158.5 252)">40</text>
<text x="1158.5" y="294.5" font-size="11.5" textLength="13" lengthAdjust="spacingAndGlyphs" transform="rotate(-90 1158.5 294.5)">40</text>
<path class="t" d="M1181 257L1181 304"/>
<path class="t" d="M1178.5 259.5L1183.5 254.5"/>
<path class="t" d="M1178.5 306.5L1183.5 301.5"/>
<text x="1179" y="290.5" font-size="11.5" textLength="20" lengthAdjust="spacingAndGlyphs" transform="rotate(-90 1179 290.5)">500</text>
<path class="k" d="M1090 321L1148 321"/>
<path class="t" d="M1090 338.5L1148 338.5"/>
<path class="t" d="M1091.6 307L1091.6 325"/>
<path class="t" d="M1089.2 323.4L1094 318.6"/>
<path class="t" d="M1096 307L1096 325"/>
<path class="t" d="M1093.6 323.4L1098.4 318.6"/>
<path class="t" d="M1142 307L1142 325"/>
<path class="t" d="M1139.6 323.4L1144.4 318.6"/>
<path class="t" d="M1147 307L1147 325"/>
<path class="t" d="M1144.6 323.4L1149.4 318.6"/>
<path class="t" d="M1091.6 325L1091.6 342"/>
<path class="t" d="M1147 325L1147 342"/>
<path class="t" d="M1089.1 341L1094.1 336"/>
<path class="t" d="M1144.5 341L1149.5 336"/>
<text x="1101" y="319.5" font-size="11.5" textLength="13" lengthAdjust="spacingAndGlyphs">40</text>
<text x="1121" y="319.5" font-size="11.5" textLength="13" lengthAdjust="spacingAndGlyphs">40</text>
<text x="1109" y="337" font-size="11.5" textLength="20" lengthAdjust="spacingAndGlyphs">600</text>
<text x="1089.5" y="465.5" font-size="20" textLength="40" lengthAdjust="spacingAndGlyphs">2-2</text>
<path class="k" d="M1083.5 472.5L1146 472.5"/>
<text x="1054" y="498.5" font-size="12.5" textLength="13" lengthAdjust="spacingAndGlyphs">K1</text>
<path class="t" d="M1053 501.700H1070.6L1083 525.5"/>
<rect class="t" x="1054.3" y="524.7" width="114.1" height="45.8"/>
<rect class="m" x="1058" y="527.6" width="107" height="39.400"/>
<path class="t" d="M1120 524.7L1120 570.5"/>
<path class="m" d="M1060 531.500H1164M1060 548H1164M1060 565H1164" stroke-dasharray="8 7.500"/>
<rect x="1059.9" y="529.9" width="2.2" height="2.2"/>
<rect x="1059.9" y="545.9" width="2.2" height="2.2"/>
<rect x="1059.9" y="562.9" width="2.2" height="2.2"/>
<rect x="1161.4" y="529.9" width="2.2" height="2.2"/>
<rect x="1161.4" y="545.9" width="2.2" height="2.2"/>
<rect x="1161.4" y="562.9" width="2.2" height="2.2"/>
<rect x="1118.9" y="529.9" width="2.2" height="2.2"/>
<rect x="1118.9" y="562.9" width="2.2" height="2.2"/>
<rect x="1104.9" y="529.9" width="2.2" height="2.2"/>
<rect x="1104.9" y="562.9" width="2.2" height="2.2"/>
<path class="t" d="M1174.6 524.7L1206 524.7"/>
<path class="t" d="M1174.6 570.5L1206 570.5"/>
<path class="t" d="M1202.5 524.7L1202.5 570.5"/>
<path class="t" d="M1200 527.2L1205 522.2"/>
<path class="t" d="M1200 573L1205 568"/>
<text x="1200.5" y="557" font-size="11.5" textLength="20" lengthAdjust="spacingAndGlyphs" transform="rotate(-90 1200.5 557)">500</text>
<path class="t" d="M1054.3 575L1054.3 604"/>
<path class="t" d="M1058.5 575L1058.5 604"/>
<path class="t" d="M1165 575L1165 604"/>
<path class="t" d="M1168.4 575L1168.4 604"/>
<path class="t" d="M1054.3 604L1054.3 623.6"/>
<path class="t" d="M1168.4 604L1168.4 623.6"/>
<path class="k" d="M1051 599.6L1080 599.6"/>
<path class="k" d="M1141 599.6L1171.5 599.6"/>
<path class="t" d="M1051.9 602L1056.7 597.2"/>
<path class="t" d="M1056.1 602L1060.9 597.2"/>
<path class="t" d="M1162.6 602L1167.4 597.2"/>
<path class="t" d="M1166 602L1170.8 597.2"/>
<text x="1066.5" y="598" font-size="11.5" textLength="13" lengthAdjust="spacingAndGlyphs">40</text>
<text x="1143.5" y="598" font-size="11.5" textLength="13" lengthAdjust="spacingAndGlyphs">40</text>
<path class="t" d="M1051 619L1169.5 619"/>
<path class="t" d="M1051.8 621.5L1056.8 616.5"/>
<path class="t" d="M1165.9 621.5L1170.9 616.5"/>
<text x="1097.5" y="616.5" font-size="11.5" textLength="27" lengthAdjust="spacingAndGlyphs">1350</text>
<text x="1084.5" y="682" font-size="20" textLength="42" lengthAdjust="spacingAndGlyphs">3-3</text>
<path class="k" d="M1078 686L1161.8 686"/>
<text x="1054" y="696.2" font-size="12.5" textLength="13" lengthAdjust="spacingAndGlyphs">K1</text>
<path class="t" d="M1053 698.6H1071.6L1083 723"/>
<rect class="t" x="1061" y="722.500" width="72.8" height="46.500"/>
<rect class="m" x="1065" y="725.500" width="65.500" height="40.500"/>
<path class="t" d="M1098.6 722.5L1098.6 769"/>
<rect x="1065.9" y="726.9" width="2.2" height="2.2"/>
<rect x="1065.9" y="744.9" width="2.2" height="2.2"/>
<rect x="1065.9" y="762.4" width="2.2" height="2.2"/>
<rect x="1127.4" y="726.9" width="2.2" height="2.2"/>
<rect x="1127.4" y="744.9" width="2.2" height="2.2"/>
<rect x="1127.4" y="762.4" width="2.2" height="2.2"/>
<rect x="1097.5" y="726.9" width="2.2" height="2.2"/>
<rect x="1097.5" y="762.4" width="2.2" height="2.2"/>
<rect x="1081.9" y="762.4" width="2.2" height="2.2"/>
<path class="k" d="M1151.5 716.5L1151.5 755.6"/>
<path class="t" d="M1150.5 759.7L1150.5 771"/>
<path class="t" d="M1138.5 722.5L1179 722.5"/>
<path class="t" d="M1138.5 769L1179 769"/>
<path class="t" d="M1138.5 725.5L1154 725.5"/>
<path class="t" d="M1138.5 766L1154 766"/>
<path class="t" d="M1147.6 724.9L1152.4 720.1"/>
<path class="t" d="M1147.6 727.9L1152.4 723.1"/>
<path class="t" d="M1147.6 768.4L1152.4 763.6"/>
<path class="t" d="M1147.6 771.4L1152.4 766.6"/>
<text x="1148.5" y="752.3" font-size="11.5" textLength="13" lengthAdjust="spacingAndGlyphs" transform="rotate(-90 1148.5 752.3)">40</text>
<path class="t" d="M1175 722.5L1175 769"/>
<path class="t" d="M1172.5 725L1177.5 720"/>
<path class="t" d="M1172.5 771.5L1177.5 766.5"/>
<text x="1173.5" y="755.8" font-size="11.5" textLength="20" lengthAdjust="spacingAndGlyphs" transform="rotate(-90 1173.5 755.8)">500</text>
<text x="1148.5" y="794" font-size="11.5" textLength="12" lengthAdjust="spacingAndGlyphs" transform="rotate(-90 1148.5 794)">40</text>
<path class="t" d="M1150 771L1150 798"/>
<path class="t" d="M1061 774L1061 798"/>
<path class="t" d="M1058.6 795.9L1063.4 791.1"/>
<path class="t" d="M1065 774L1065 798"/>
<path class="t" d="M1062.6 795.9L1067.4 791.1"/>
<path class="t" d="M1130.5 774L1130.5 798"/>
<path class="t" d="M1128.1 795.9L1132.9 791.1"/>
<path class="t" d="M1133.8 774L1133.8 798"/>
<path class="t" d="M1131.4 795.9L1136.2 791.1"/>
<path class="t" d="M1054 793.5L1075 793.5"/>
<path class="k" d="M1076 793.5L1093 793.5"/>
<path class="k" d="M1101 793.5L1117 793.5"/>
<path class="t" d="M1120 793.5L1137 793.5"/>
<text x="1079.5" y="792" font-size="11.5" textLength="13" lengthAdjust="spacingAndGlyphs">40</text>
<text x="1103.5" y="792" font-size="11.5" textLength="13" lengthAdjust="spacingAndGlyphs">40</text>
<path class="t" d="M1061 798L1061 823"/>
<path class="t" d="M1133.8 798L1133.8 823"/>
<path class="t" d="M1058 818L1136.6 818"/>
<path class="t" d="M1058.5 820.5L1063.5 815.5"/>
<path class="t" d="M1131.3 820.5L1136.3 815.5"/>
<text x="1087.8" y="815.5" font-size="11.5" textLength="20" lengthAdjust="spacingAndGlyphs">800</text>
<path class="t" style="stroke-width:1.5" d="M1223.8 465.8H1292.8M1258 431.6V501.4"/>
<rect class="t" x="1254" y="461.800" width="8" height="8"/>
</svg>
<!-- status bar -->
<svg class="ui" width="1434" height="1083" viewBox="0 0 1434 1083">
<text x="18" y="1078.500" textLength="213" lengthAdjust="spacingAndGlyphs">-19.47294, 188.82998, 0.00000</text>
<g fill="none" stroke-width="1.3">
<path d="M351.6 1083V1062.600H385" stroke="#dcebde"/><path d="M385.600 1062V1083" stroke="#5c9a64"/>
<path d="M391.6 1083V1062.600H442.500" stroke="#dcebde"/><path d="M443 1062V1083" stroke="#5c9a64"/>
<path d="M449 1083V1062.600H491.500" stroke="#dcebde"/><path d="M492 1062V1083" stroke="#5c9a64"/>
<path d="M499.600 1083V1062.600H556" stroke="#dcebde"/><path d="M556.600 1062V1083" stroke="#5c9a64"/>
<path d="M562.600 1083V1062.600H606.500" stroke="#dcebde"/><path d="M607 1062V1083" stroke="#5c9a64"/>
<path d="M667 1083V1062.600H728.500" stroke="#dcebde"/><path d="M729 1062V1083" stroke="#5c9a64"/>
<path d="M613 1083V1062.600H661" stroke="#000"/><path d="M661 1062V1083" stroke="#dcebde"/>
<path d="M735 1083V1062.600H795.500" stroke="#000"/><path d="M795.500 1062V1083" stroke="#dcebde"/>
</g>
<text x="355" y="1078.500" textLength="29" lengthAdjust="spacingAndGlyphs">ШАГ</text>
<text x="394" y="1078.500" textLength="47" lengthAdjust="spacingAndGlyphs">СЕТКА</text>
<text x="451.500" y="1078.500" textLength="39" lengthAdjust="spacingAndGlyphs">ОРТО</text>
<text x="502" y="1078.500" textLength="53" lengthAdjust="spacingAndGlyphs">ПОЛЯР</text>
<text x="565" y="1078.500" textLength="40.500" lengthAdjust="spacingAndGlyphs">ВЫРВ</text>
<text x="617" y="1079" textLength="42" lengthAdjust="spacingAndGlyphs">СЛЕД</text>
<text x="669.500" y="1078.500" textLength="58" lengthAdjust="spacingAndGlyphs">ВЕСЛИН</text>
<text x="739" y="1079" textLength="54" lengthAdjust="spacingAndGlyphs">МОДЕЛ</text>
</svg>
<!-- toolbar 1 icons -->
<svg id="ic1" width="1434" height="96" viewBox="0 0 1434 96">
<style>#ic1 .s{stroke:#000;stroke-width:1.4;fill:none}#ic1 .b{stroke:#000;stroke-width:2.2;fill:none}#ic1 .g{stroke:#808080;stroke-width:1.4;fill:none}#ic1 .r{stroke:#800000;stroke-width:1.4;fill:none}#ic1 .n{stroke:#000080;stroke-width:1.4;fill:none}#ic1 text{font-size:7.5px;font-weight:bold;fill:#000}</style>
<!-- 1 linear dim -->
<path class="b" d="M26 69V83M44 69V83"/><path class="s" d="M28 74.400H42" style="stroke-width:1.8"/>
<path d="M27.200 74.400l4.300 -3.300v6.600zM42.800 74.400l-4.300 -3.300v6.600z"/>
<!-- 2 aligned dim -->
<path class="s" d="M57 71.600L65.500 63.200M73 84.500L79.700 78.300M62.500 68.800L73.500 81.800"/>
<path d="M61.200 67.400l4.600 0.600l-3.600 3.600zM75 83l-4.600 -0.600l3.600 -3.600z" stroke="#000" stroke-width="1.2"/>
<!-- 3 ordinate -->
<text x="98.500" y="68.500">0</text><text x="108.500" y="68.500">X</text><text x="90.500" y="76.500">Y</text><text x="90.500" y="84.500">0</text>
<path class="s" d="M97 72H102M101.300 72V84.500M97 82.600H111M107.300 76V84.500M101.300 72L107 77.500M111.300 70V75"/><path class="b" d="M105 76.600H113"/>
<!-- 4 radius -->
<circle class="g" cx="144.500" cy="74" r="10"/>
<path class="s" d="M145.500 75L140.500 70" style="stroke-width:1.800"/><path d="M138.800 68.300h5l-5 5z"/><circle cx="145.500" cy="74.800" r="1.200"/>
<!-- 5 diameter -->
<circle class="g" cx="178.400" cy="74" r="10"/>
<path class="s" d="M174 70L183 78.300" style="stroke-width:1.800"/><path d="M172.300 68.300h5.200l-5.200 5zM184.800 79.800h-5.200l5.200 -5z"/>
<!-- 6 angular -->
<path class="b" d="M201.800 83.700H221"/><path class="s" d="M202.200 77.400L214 64.900"/>
<path class="s" d="M212.500 70.500Q217 75 217 81" stroke-dasharray="2.200 1.400" style="stroke-width:1.800"/>
<path d="M210.800 68.500h5.400l-1 4.600zM214.500 79h5.200l-2.600 3.400z"/>
<!-- 7 quick dim -->
<path class="b" d="M243 63V77.800M261.200 63V72.800"/><path class="s" d="M245 68.200H260" style="stroke-width:1.600"/>
<path d="M244.800 68.200l3.600 -3.200v6.400zM259.600 68.200l-3.600 -3.200v6.400z"/>
<path d="M262.500 71.500l2.600 0.600l-1.600 3l1.600 0.600l-1 3.200l-4 1.600l-1.600 3.600l-2.600 0.800l2 -4l-2 -0.400l3.400 -3.600l2 -1z" fill="#ff0"/>
<!-- 8 baseline dim -->
<path class="b" d="M278 65.300V84.500M292.200 73.200V84.500"/><path class="s" d="M280 68.600H296M280 78.700H291" style="stroke-width:1.600"/>
<path d="M279.600 68.600l3.600 -3.200v6.400zM297.800 68.600l-3.600 -3.200v6.400zM279.600 78.700l3.600 -3v6zM291.400 78.700l-3.600 -3v6z"/>
<!-- 9 continue dim -->
<path class="b" d="M310 66V83M331 66V83"/><path class="s" d="M321.400 66V83M311 72.400H330"/>
<path d="M311.400 72.400l3 -2.400v4.800zM320.800 72.400l-3 -2.400v4.800zM322 72.400l3 -2.400v4.800zM330 72.400l-3 -2.400v4.800z"/>
<!-- 10 quick leader -->
<path class="s" d="M353.500 76L360 70.500Q362 68.300 364 68.300"/><path d="M351 78.200l1.600 -4.600l3 3z"/>
<path class="s" d="M366.500 71.600L369.500 63.200L372.600 71.600M367.600 69H371.500" style="stroke-width:1.500"/>
<path d="M372.500 71l2 0.600l-1.400 3l1.400 0.600l-1 3.200l-4 1.600l-1.400 3.600l-2.400 0.800l2 -4l-2 -0.400l3.400 -3.600l2 -1z" fill="#ff0"/>
<!-- 11 tolerance -->
<rect x="385" y="69" width="23" height="13"/><rect x="387.200" y="71.200" width="8.600" height="8.600" fill="#fff"/><rect x="398" y="71.200" width="7.800" height="8.600" fill="#fff"/>
<circle class="s" cx="391.500" cy="75.500" r="2.600" style="stroke-width:1.100"/><path class="s" d="M391.500 71.800V79.200M387.800 75.500H395.200" style="stroke-width:1"/>
<path d="M399.200 78.400h1.600v1.200h-1.600zM402.800 72.200h1.700v7.400h-1.700zM401.600 73.400h1.400v1.200h-1.400z"/>
<!-- 12 center mark -->
<circle class="g" cx="430.600" cy="74" r="10"/><path class="s" d="M427 74.200H434.400M430.700 70.500V78" style="stroke-width:1.700"/>
<!-- 13 dim edit -->
<path class="r" d="M466.500 74.500L471 63.500L475.600 74.500M468 71H474" style="stroke-width:1.600"/>
<path class="b" d="M463 76.200V84.500M481.200 76.200V84.500"/><path class="s" d="M464 79.600H480" style="stroke-width:1.500"/>
<path d="M464.400 79.600l3.400 -2.800v5.600zM479.800 79.600l-3.400 -2.800v5.600z"/>
<!-- 14 dim text edit -->
<path class="g" d="M508.800 74.500L512.600 63.500L516.500 74.500M510 71.500H515.400" style="stroke:#a0a0a4"/>
<path class="s" d="M501.600 75.800L506.200 65.300L510.800 75.800M503 72.500H509.400" style="stroke-width:1.600"/>
<path class="b" d="M496.600 78.300V84.500M516 78.300V84.500"/><path class="b" d="M498 81.300H515"/>
<path d="M497.400 81.300l3.400 -2.800v5.600zM515.200 81.300l-3.400 -2.800v5.600z"/>
<!-- 15 dim update -->
<path class="r" d="M533.200 65.300V81.600" style="stroke-width:2"/><path class="r" d="M548.600 65.300V81.600" style="stroke:#c00000;stroke-width:1.200"/>
<path class="r" d="M534 69.500H548" style="stroke-width:2.200"/><path d="M534 69.500l3.400 -3v6zM548 69.500l-3.400 -3v6z" fill="#800000"/>
<path class="b" d="M530 71V83"/><path class="s" d="M545.700 71V83M531 76.200H545"/>
<path d="M531.200 76.200l3.200 -2.600v5.200zM545.200 76.200l-3.200 -2.600v5.200z"/>
<!-- 16 dimstyle -->
<path class="s" d="M767.800 65.300V78.300M786.500 65.300V78.300" style="stroke-width:1.600"/><path class="s" d="M769 69.500H786" style="stroke-width:1.700"/>
<path d="M768.600 69.500l3.600 -3v6zM786 69.500l-3.600 -3v6z"/>
<circle cx="771" cy="75.800" r="4.200" fill="#fff" stroke="#000" stroke-width="1.400"/><path d="M769.500 72.500h2.400v2.400h-2.400z" fill="#a0a0a4"/>
<path class="b" d="M774 79L779.500 84" style="stroke-width:2.600"/><path d="M776.500 81l1.400 1.400" stroke="#008080" stroke-width="1.400"/>
</svg>
<!-- standard toolbar icons -->
<svg id="ic2" width="1434" height="96" viewBox="0 0 1434 96">
<style>#ic2 .s{stroke:#000;stroke-width:1.4;fill:none}#ic2 .b{stroke:#000;stroke-width:2.2;fill:none}#ic2 .n{stroke:#000080;stroke-width:1.5;fill:none}</style>
<!-- new -->
<path d="M829.700 66H839.500L843.200 69.700V82.300H829.700Z" fill="#fff" stroke="#000" stroke-width="1.400"/><path class="s" d="M839.300 66V70H843.200" style="stroke-width:1.200"/>
<!-- open -->
<path d="M858.700 70H863.500L864.500 71.500H872.500V75.500H858.700Z" fill="#ffff80" stroke="#000" stroke-width="1.400"/>
<path d="M858.700 70V82.300" class="b"/>
<path d="M858.700 82.300L864 75.500H881L875 82.300Z" fill="#808000" stroke="#000" stroke-width="1.200"/>
<path d="M859.800 71.500h3v9l-3 0z" fill="#ffff80"/>
<path class="s" d="M870.500 67.500Q874 63.500 877.500 67V70.500M875 70.500H879.600" style="stroke-width:1.500"/>
<!-- save -->
<rect x="893.700" y="65.600" width="18.400" height="18.200" fill="#808000" stroke="#000" stroke-width="1.500"/>
<rect x="898" y="66.300" width="11.800" height="8.800" fill="#a4c8a9"/><path class="s" d="M898 66.300V75.200H909.800V66.300" style="stroke-width:1.200"/>
<rect x="898" y="78.300" width="11.800" height="5.400" fill="#000"/><rect x="905.600" y="79.300" width="3.400" height="4" fill="#a4c8a9"/>
<rect x="910" y="66.600" width="1.600" height="1.600" fill="#fff"/>
<!-- print -->
<path d="M940.500 70L943.500 63.500H955L952.500 70Z" fill="#fff" stroke="#000" stroke-width="1.400"/><path class="b" d="M944.500 66H952M943.600 68.400H951"/>
<path d="M934.600 74.500L938.600 70H956L956 78L952 82.500H934.600Z" fill="#c8dccb" stroke="#000" stroke-width="1.400"/>
<path class="s" d="M934.600 74.500H952.300V82.500M952.300 74.500L956 70M934.600 78.600H952.300" style="stroke-width:1.300"/>
<path d="M950 70.500h5l-2.600 3.600h-4z" fill="#5a7a62"/><rect x="944" y="76.800" width="3.600" height="1.200" fill="#ff0"/><rect x="944" y="75.600" width="3.600" height="1.200" fill="#808080"/>
<!-- preview -->
<path d="M968.600 63.700H979.500L983.400 67.500V84H968.600Z" fill="#fff"/><path class="s" d="M968.600 84V63.700H979.500" style="stroke:#808080;stroke-width:1.600"/><path class="b" d="M968 84H983.600M983 68V84" /><path class="s" d="M979.500 64.500V68H983"/>
<circle cx="981.300" cy="76.200" r="4.800" fill="#fff" stroke="#000" stroke-width="1.400"/><path d="M978.500 77V74h3.400" stroke="#0ff" stroke-width="1.600" fill="none"/><path d="M976.600 73l1.500 -1.600" stroke="#c0c0c0" stroke-width="1.400"/>
<path class="b" d="M985 80L989.300 84" style="stroke-width:2.800"/><path d="M987.500 82.200l1.600 1.400" stroke="#000080" stroke-width="1.600"/>
<!-- find -->
<circle cx="1009.400" cy="71.600" r="8.200" fill="#fff" stroke="#000" stroke-width="1.700" stroke-dasharray="5 2.400"/>
<text x="1004.300" y="75" style="font-size:9.500px;font-weight:bold;fill:#800000" textLength="10.500" lengthAdjust="spacingAndGlyphs">ab</text>
<path d="M1018 70.600h3.600M1018 73.600h3.600" stroke="#800000" stroke-width="1.500"/>
<path class="b" d="M1015.500 78L1021 84" style="stroke-width:2.600"/><path d="M1018.300 81l1.800 1.800" stroke="#800000" stroke-width="1.400"/>
<!-- cut -->
<path class="b" d="M1051 65.300L1054.600 75M1056.600 65.300L1053 75" style="stroke-width:1.800"/>
<ellipse class="n" cx="1050" cy="80.800" rx="2.500" ry="3" style="stroke-width:1.700"/><ellipse class="n" cx="1057.500" cy="79.800" rx="2.500" ry="3.200" style="stroke-width:1.700"/>
<path class="n" d="M1054 75L1051.500 78M1053.600 75L1056.600 77"/>
<!-- copy -->
<path d="M1077.700 66H1084.500L1088 69.500V78.600H1077.700Z" fill="#fff" stroke="#000" stroke-width="1.400"/><path class="s" d="M1080 70H1083.500M1080 72.800H1085M1080 75.600H1085" style="stroke-width:1.200"/>
<path d="M1086 70.200H1093.500L1097.600 74V82.500H1086Z" fill="#fff" stroke="#000080" stroke-width="1.700"/><path d="M1088.500 74H1092M1088.500 76.800H1095M1088.500 79.600H1095" stroke="#000" stroke-width="1.300"/>
<!-- paste -->
<rect x="1111.700" y="66.800" width="17.600" height="15.400" rx="1" fill="#808040" stroke="#000" stroke-width="1.500"/>
<path d="M1116.500 69.800L1118 67H1123L1124.500 69.800Z" fill="#c8dccb" stroke="#000" stroke-width="1"/><rect x="1118.800" y="64.800" width="3.600" height="2" fill="#ff0"/>
<path class="s" d="M1116 70.300H1125.500" style="stroke:#fff;stroke-width:1"/>
<path d="M1120.200 74H1128.500L1132.300 77.500V84H1120.200Z" fill="#fff" stroke="#000080" stroke-width="1.700"/><path d="M1122.500 78H1127M1122.500 80.800H1130" stroke="#000080" stroke-width="1.400"/>
<!-- match prop -->
<rect x="1144" y="80" width="6.200" height="5.200" fill="#f00"/><rect x="1150.900" y="80" width="6.200" height="5.200" fill="#ff0"/><rect x="1157.800" y="80" width="6.200" height="5.200" fill="#00f"/>
<path d="M1146 72.500L1153 70L1160 76L1156 79.500L1149.500 78Z" fill="#000"/><path class="s" d="M1144 71L1148 73"/>
<path d="M1153 70L1156.500 67L1162.500 73L1160 76Z" fill="#fff" stroke="#808080" stroke-width="0.800"/>
<path d="M1155.500 67.500L1160.500 66L1163.500 69L1162.500 73.500Z" fill="#800000"/>
<path d="M1160.500 65.500L1163.500 62.800L1167 65.500L1164.500 69Z" fill="#f00" stroke="#000" stroke-width="0.800"/>
<rect x="1147.200" y="73.200" width="2.600" height="2" fill="#808080"/>
<!-- undo / redo -->
<path d="M1188.800 71.200V78.300H1196Z" fill="#000080"/><path class="n" d="M1193.500 73.500Q1197 68.500 1202 70Q1206.500 72 1204.500 77.500" style="stroke-width:2"/>
<path d="M1239 71.200V78.300H1231.800Z" fill="#000080"/><path class="n" d="M1234.300 73.500Q1230.800 68.500 1225.800 70Q1221.300 72 1223.300 77.500" style="stroke-width:2"/>
<!-- globe -->
<circle cx="1270" cy="71" r="7.600" fill="#00f" stroke="#808080" stroke-width="1"/>
<path d="M1268 64.500Q1274 62.500 1277 68L1276 72L1272 75L1268.500 72.500L1266.500 68Z" fill="#008000"/><path d="M1264.500 66l3 -1.600l0.600 2.400l-2.600 1.400z" fill="#fff"/>
<path d="M1271 68h3v3h-3z" fill="#00f"/>
<path class="b" d="M1276.500 66.500Q1279.500 69 1279 75.500" style="stroke-width:1.800"/>
<rect x="1267.300" y="76.200" width="7" height="7.400" rx="1.500" fill="#fff" stroke="#000" stroke-width="1.500"/><rect x="1276" y="76.200" width="7" height="7.400" rx="1.500" fill="#fff" stroke="#000" stroke-width="1.500"/>
<path class="b" d="M1268.500 79H1273.500M1277 79H1282M1273.800 80.200H1276.500M1269 84H1273M1277.500 84H1281.500" style="stroke-width:1.700"/>
<!-- tracking -->
<path d="M1303.500 72.800h3M1305 71v3.600" class="b" style="stroke-width:1.700"/><path class="s" d="M1307.500 72.800H1320" stroke-dasharray="1.500 1.500"/>
<circle cx="1323.400" cy="73.400" r="2.300" fill="#fff" stroke="#a00000" stroke-width="1.300"/><path d="M1325.600 79.600V84.600H1320.800Z"/>
<!-- insert block -->
<path d="M1337.500 70L1343.500 64L1349.500 70V72H1337.500Z" fill="#fff" stroke="#000" stroke-width="1.500"/>
<rect x="1339.800" y="74.500" width="7.200" height="7.800" fill="#fff" stroke="#000" stroke-width="1.500"/><rect x="1348.600" y="74.500" width="7.200" height="7.800" fill="#fff" stroke="#000" stroke-width="1.500"/>
<path class="s" d="M1341.500 78.400H1345.500M1343.500 76.400V80.400" style="stroke-width:1.400"/><circle class="s" cx="1353.500" cy="77.800" r="1.700" style="stroke-width:1"/><path class="s" d="M1343 67.800h1.600" style="stroke-width:1.600"/>
<path d="M1360 79.600V84.600H1355.200Z"/><path d="M1349.500 72L1355.800 74.500" class="s"/>
<!-- distance -->
<path d="M1370.800 70.500h3M1372.300 69v3.600M1389 70.500h3M1390.500 69v3.600" class="b" style="stroke-width:1.700"/><path d="M1375 71H1388" stroke="#c00000" stroke-width="1.300" stroke-dasharray="1.600 1.400"/>
<rect x="1370.800" y="76.300" width="22.200" height="5.300" fill="#000"/><rect x="1371.800" y="78.300" width="18" height="1.600" fill="#ff0"/>
<path d="M1393 79.600V84.600H1388.200Z"/><path d="M1388 80l4 -2.600" stroke="#a4c8a9" stroke-width="1.200"/>
<!-- last: pen -->
<path d="M1424.500 64.500L1434 62V70L1428 73Z" fill="#d8e060"/>
<path class="s" d="M1427.500 63L1423 79M1434 68L1424 82" style="stroke-width:1.700" stroke-dasharray="3 1.200"/>
<path d="M1423.500 73l3.600 -1l0.600 4.500l-3.400 3z" fill="#fff"/>
<path class="s" d="M1414 80L1417 80.500L1420.500 83.500L1424 82.500" style="stroke-width:1.800"/><path d="M1424.500 83.800H1433" stroke="#909090" stroke-width="1.800"/>
</svg>
<!-- layer toolbar icons -->
<svg id="ic3" width="1434" height="136" viewBox="0 0 1434 136">
<style>#ic3 .s{stroke:#000;stroke-width:1.400;fill:none}#ic3 .b{stroke:#000;stroke-width:2.200;fill:none}</style>
<!-- make object's layer current -->
<path d="M28 115.500L37 115.500L45 121.500L33 121.500Z" fill="#ff0"/>
<path class="s" d="M24.500 106.800H39L45.500 112M26 111.500H29M29.500 111.500L33 114.500H45.500M25 116H28M27 116L33.500 122.600H45.800M24.500 106.800L27 110.500" style="stroke-width:1.600"/>
<path class="b" d="M30 122.600H45.800" /><path class="s" d="M24 123.500L28 118.500M27.300 119.500V126"/><path d="M24.500 119.500h4l-1 4z"/>
<path class="s" d="M37 107L39.500 109.500M43.500 111l2 1.600" style="stroke-width:2"/>
<!-- layers -->
<path d="M58 107.600H72.500L79.500 113.500H64.500Z M60 112.500L66 117.500H79.500L76 114 M60 117L66.500 122.800H79.500L76 119.500" fill="#fff"/>
<path class="b" d="M57.500 107.800H72.500"/><path class="s" d="M72.500 107.800L79.800 113.500H64.500L58 108M58 112.500H61M60.500 112.500L66 117.600H79.800M58 117.200H61M60.500 117.200L66.500 123H79.800" style="stroke-width:1.500"/>
<path class="b" d="M65 113.800H79.800M66.500 118.400H79.800" style="stroke-width:1.800"/>
<!-- bulb -->
<path d="M104 106h3v-1h5v1h3v3h1v6h-2v2h-2v6h-6v-6h-2v-2h-2v-6h2z" fill="#ff0"/>
<circle cx="109.400" cy="112.300" r="4.600" fill="#ffff80"/><path d="M107.300 116h4.200v5h-4.200z" fill="#ffff80"/>
<path class="s" d="M108 107.300Q112 106.600 113.600 110Q114.600 113 112.600 115.600" style="stroke-width:1.700"/>
<path class="s" d="M105.300 109.500Q104 113 106.500 116" style="stroke:#808080;stroke-width:1.100"/>
<path class="b" d="M107 117.500V122.500M111.600 117V122.500" style="stroke-width:1.800"/><path class="b" d="M107.500 123.300H111.500" style="stroke-width:1.600"/><rect x="108.300" y="120.800" width="2.400" height="2" fill="#a0a0a4"/>
<!-- sun -->
<path d="M123 107h3v3h1v-3h7v3h1v-3h4v3h-2v2h2v7h-2v1h2v3h-4v-2h-1v2h-7v-2h-1v2h-3v-3h2v-2h-2v-7h2v-1h-2z" fill="#ff0"/>
<circle cx="130.900" cy="114.900" r="5.300" fill="#ffff80" stroke="#000" stroke-width="1.500" stroke-dasharray="2.600 1.600"/>
<circle cx="130.900" cy="114.900" r="3.600" fill="#ffff80"/>
<path class="s" d="M125 109l1.600 1.600M136.800 109l-1.600 1.600M125 120.800l1.600 -1.600M136.800 120.800l-1.600 -1.600" style="stroke-width:1.200"/>
<!-- lock -->
<path d="M154 113V109.500Q154 106.800 157.500 106.800Q161 106.800 161 109.500V115" fill="none" stroke="#808000" stroke-width="1.800"/>
<rect x="144" y="113" width="13" height="10" fill="#000"/><path d="M144 115.800H157M144 118.600H157M144 121.400H157" stroke="#808000" stroke-width="1.300"/>
<path d="M154 113v-3.500" stroke="#000" stroke-width="1.600"/>
<!-- printer -->
<path d="M174 111L177 104.500H187.500L185 111Z" fill="#fff" stroke="#000" stroke-width="1.500"/>
<path d="M179.600 106v4.600" stroke="#00f" stroke-width="1.700"/><path d="M183.300 106l-1.200 4.600" stroke="#f00" stroke-width="1.700"/>
<path d="M168.500 114L172 110.500H187.500V118L184 122.500H168.500Z" fill="#fff" stroke="#000" stroke-width="1.500"/>
<path class="s" d="M168.500 114.500H184V122.500M184 114.500L187.500 110.500M168.500 118.600H184" style="stroke-width:1.300"/>
<path d="M170.800 116.400h1.500M173.600 116.400h1.500" stroke="#008000" stroke-width="1.200"/>
<!-- color square -->
<rect x="190" y="109" width="13.800" height="13.800" fill="#000"/>
</svg>
<!-- left toolbars icons -->
<svg id="ic4" width="80" height="700" viewBox="0 0 80 700">
<style>#ic4 .s{stroke:#000;stroke-width:1.400;fill:none}#ic4 .b{stroke:#000;stroke-width:2.300;fill:none}#ic4 .r{stroke:#800000;stroke-width:1.400;fill:none}#ic4 .rf{fill:#800000}#ic4 .w{fill:#fff;stroke:#000;stroke-width:1.500}</style>
<!-- DRAW column -->
<!-- line -->
<path class="s" d="M10 173.300L24.600 158.900"/><rect class="rf" x="8.200" y="171.400" width="3.800" height="3.800"/><rect class="rf" x="22.600" y="157" width="3.800" height="3.800"/><circle cx="16" cy="167.300" r="1"/>
<!-- xline -->
<path class="s" d="M8 207L27 189"/><path d="M7.200 207.700l1.600 -5.600l4.200 4.400zM27.700 188.300l-1.600 5.600l-4.200 -4.400z"/><rect class="rf" x="15.500" y="196.200" width="3.600" height="3.600"/>
<path class="s" d="M21.500 191.500L27.700 190M24.500 188.500l-0.500 5"/>
<!-- mline -->
<path class="s" d="M8.500 234.500L23 220.500L29 226L14.500 240Z" stroke-dasharray="3.200 1.600"/><path class="s" d="M14 233L23.500 227" stroke-dasharray="1.400 2.400"/>
<rect class="rf" x="24.200" y="222" width="3.400" height="4.600"/><rect class="rf" x="10" y="235" width="3.400" height="4.600"/>
<!-- pline -->
<path class="s" d="M10 268.900H23Q29.200 268.900 29 263.500Q28.800 258.400 20.500 258.400"/><rect class="rf" x="8.300" y="267" width="3.600" height="3.600"/><rect class="rf" x="21" y="267" width="3.600" height="3.600"/><rect class="rf" x="18.500" y="256.600" width="3.600" height="3.600"/>
<!-- polygon -->
<path class="w" d="M18.300 288L26.500 295L23 302.500H13.500L10.300 295Z"/>
<!-- rectangle -->
<rect class="w" x="8.800" y="322.500" width="18.800" height="10.500"/><path class="b" d="M8.800 322V333.500"/><rect class="rf" x="25.500" y="320" width="3.600" height="3.600"/><rect class="rf" x="7" y="331.500" width="3.600" height="3.600"/>
<!-- arc -->
<path class="b" d="M9.400 368.300Q10.500 354 26 351.600" style="stroke-width:1.800"/><circle class="rf" cx="26" cy="351.800" r="2"/><circle class="rf" cx="14.800" cy="356" r="1.700"/><path class="rf" d="M7.300 367.500h1.600v-1.600h2v1.600h1.600v2h-1.600v1.600h-2v-1.600h-1.600z"/>
<!-- circle -->
<circle class="w" cx="17.700" cy="392" r="8.700" style="stroke-width:1.700"/><path class="r" d="M17 393L22 387.500M15 392H19M17 390V395"/>
<!-- spline -->
<path class="s" d="M7.300 431.500Q8.500 420 15 421Q19 422 21.500 425.500Q27 428.500 28.800 419.200" style="stroke-width:1.600"/>
<!-- ellipse -->
<ellipse class="w" cx="17.700" cy="457.600" rx="10.400" ry="5.600"/><path class="r" d="M15.300 457.600H20M17.600 455.200V460M25.600 457.600H29.500M27.600 455.500V459.800M15 451.800H20.500" style="stroke-width:1.300"/>
<!-- insert block -->
<path d="M14.500 479.500H24.500L28.600 483.500V497.500H14.500Z" class="w"/><path d="M26 494.500h3v5.500h-3.500z"/>
<rect x="8.500" y="486" width="11.500" height="11" fill="#ffff80" stroke="#000" stroke-width="1.500"/><circle cx="19" cy="495.500" r="4.800" fill="#ffff80"/><circle class="s" cx="17" cy="492.500" r="3" style="stroke-width:1.200"/>
<path class="s" d="M15 498Q18 501.500 22 499.500" style="stroke-width:1.600"/><rect x="7" y="492.600" width="2.400" height="2.400"/>
<!-- make block -->
<rect x="11.500" y="515.300" width="12.300" height="10.500" fill="#ffff80" stroke="#000" stroke-width="1.500"/><circle cx="22.800" cy="526.300" r="5" fill="#ffff80"/><circle class="s" cx="20" cy="523.500" r="2.800" style="stroke-width:1.200"/>
<path class="s" d="M18.500 529.500Q22 532.500 26 530.500" style="stroke-width:1.600"/><rect x="10" y="523.500" width="2.400" height="2.400"/>
<!-- point -->
<path class="rf" d="M15.200 555.200h4.200v1.800h-4.200zM16.400 554h1.800v4.200h-1.800z"/>
<!-- hatch -->
<rect x="10.400" y="581.700" width="11.800" height="11.800" fill="#800000"/><path d="M11 586l4.500 -4M11 591l9.500 -9M13.500 593.500l8.500 -8M18.500 593.500l3.500 -3.500" stroke="#fff" stroke-width="1.400"/>
<path class="s" d="M7.600 581.700H27M7.600 593.500H27M10.400 578V597M22.200 578V597" style="stroke-width:1.300"/>
<!-- region -->
<path class="w" d="M10.800 612.500H21.500L26.600 617V626.800H10.800Z" style="stroke-width:1.700"/><path class="b" d="M10 627H27"/><ellipse class="s" cx="17.500" cy="619.500" rx="3.200" ry="2.800" style="stroke-width:1.500"/>
<!-- text A -->
<text x="6" y="662.600" textLength="23" lengthAdjust="spacingAndGlyphs" style="font-family:'Liberation Serif',serif;font-size:29px;font-weight:bold;fill:#000">A</text>
<!-- MODIFY column -->
<!-- erase -->
<path d="M53.500 166L58.500 160.500L62.500 164.500L57.500 170.500Q54 172.500 52.500 170Q51.500 168 53.500 166Z" fill="#c000c0" stroke="#000" stroke-width="1"/>
<path d="M58.500 160.500L61 158L65 162L62.500 164.500Z" fill="#fff" stroke="#000" stroke-width="1"/>
<path d="M61 158L66.500 155L67 160L65 162Z" fill="#c8b400"/><path d="M64.500 155.500l2.200 -0.600l0.300 2.600z" fill="#808000"/>
<path class="b" d="M45 173.500H49.500M62 173.500H67"/><path d="M49.500 173.500h3M59 173.500h3" stroke="#808080" stroke-width="1.600"/>
<!-- copy object -->
<circle class="w" cx="49.600" cy="192.500" r="4.400" style="stroke-width:1.300"/><circle class="w" cx="63" cy="204.500" r="4" style="stroke-width:1.300"/><circle class="w" cx="59.500" cy="200.500" r="4.400" style="stroke-width:1.300"/>
<path class="s" d="M57 190Q61.500 190 62.500 194.500" style="stroke-width:1.500"/><path d="M60 193h4.600l-2 3z"/><path class="b" d="M60.500 207.800H63.500"/>
<!-- mirror -->
<path d="M54 222.500V239H47Z M59 222.500V239H66Z" fill="#fff" stroke="#000" stroke-width="1.500"/><path class="b" d="M46.500 239.300H54.500M58.500 239.300H66.500"/><path class="b" d="M54 222V239M59 222V239" style="stroke-width:1.800"/>
<path d="M56.500 220V241" stroke="#a00000" stroke-width="1.300"/>
<!-- offset -->
<path class="s" d="M53.500 256H59.500Q62 259 62.500 261Q67 262.500 66.300 267.500Q65.500 271 62 271H50.500Q46.500 270.500 45.700 266.500Q46 262 50 261Q51 258 53.500 256Z" style="stroke-width:1.600"/>
<path class="r" d="M54.800 259.500V264.800H49.500Q47.800 266.500 49.500 268.200H63.500Q65 266.500 63.500 264.800H58.200V259.500Q56.500 258 54.800 259.500Z" style="stroke-width:1.300"/>
<!-- array -->
<rect class="w" x="46.800" y="286.800" width="7.300" height="7" style="stroke-width:1.700"/><rect class="w" x="57.800" y="286.800" width="7.300" height="7" style="stroke-width:1.700"/><rect class="w" x="46.800" y="298.600" width="7.300" height="6.600" style="stroke-width:1.700"/><rect class="w" x="57.800" y="298.600" width="7.300" height="6.600" style="stroke-width:1.700"/>
<!-- move -->
<path class="s" d="M48 327.700H65M56.500 319V336.500" style="stroke-width:1.600"/><path d="M46 327.700l4 -3.200v6.400zM67 327.700l-4 -3.200v6.400zM56.500 317l3.300 4h-6.600zM56.500 338.500l3.300 -4h-6.600z"/>
<!-- rotate -->
<path class="b" d="M51 357.500Q47.500 363 51 367.500Q56 371.500 61 367.500Q64.500 362.500 60.500 357" style="stroke-width:2.400"/><path d="M49.500 353.500h6v5.500h-3.500z"/>
<!-- scale -->
<rect x="48.600" y="384.800" width="14.800" height="16.400" fill="#fff" stroke="#a00000" stroke-width="1.400"/><path d="M56 401.300H63.500" stroke="#800000" stroke-width="2.200"/>
<rect class="s" x="48.600" y="392.300" width="8" height="9" stroke-dasharray="1.500 1.500" style="stroke-width:1.500"/>
<!-- stretch -->
<path d="M47 418H58.200L65.400 433.300H47Z" fill="#fff"/><path class="b" d="M47.300 434V418.500H58.500" style="stroke-width:2.400"/><path class="s" d="M46.500 433.300H58"/>
<path class="r" d="M58.500 418.500L65.400 433.300H57.500"/><path class="s" d="M57.600 420V433" stroke-dasharray="1.500 1.500"/><rect class="rf" x="60.200" y="424" width="2" height="2.400"/>
<!-- lengthen -->
<path class="s" d="M47.600 466L56 457.500"/><path class="r" d="M57 456.500L63.500 450" stroke-dasharray="2 2" style="stroke-width:1.700"/><circle cx="64.800" cy="448.800" r="2" class="rf" stroke="#000" stroke-width="0.800"/><circle cx="47.800" cy="465.800" r="1.700" class="rf"/>
<!-- trim -->
<path class="b" d="M46 490.300H56.500" style="stroke-width:3"/><path class="s" d="M51 500.300L59.800 481.400" style="stroke-width:1.800"/><path class="r" d="M57.500 490.300H67" stroke-dasharray="2.200 1.800" style="stroke-width:2.600"/>
<!-- extend -->
<path class="b" d="M45 520.400H53.200" style="stroke-width:3"/><path class="r" d="M55 520.400H62.500" stroke-dasharray="2.200 1.800" style="stroke-width:2.600"/><path class="s" d="M57.600 532.400L66.500 513.600" style="stroke-width:1.800"/>
<!-- break -->
<rect class="w" x="45.500" y="550.300" width="20" height="10.500" style="stroke-width:1.600"/><path class="r" d="M48.500 550H52.500M50.500 548V552.500M59 550H63M61 548V552.500" style="stroke-width:1.600"/>
<!-- chamfer -->
<path class="s" d="M48.500 597V588L57 580.200H65.700" style="stroke-width:1.500"/><path class="s" d="M48.500 587V580.200H56" stroke-dasharray="1.300 1.300" style="stroke-width:1.100"/>
<!-- fillet -->
<path class="s" d="M48.500 629V621Q49 612.500 58 612.200H65.700" style="stroke-width:1.500"/><path class="s" d="M48.500 620V612.200H56" stroke-dasharray="1.300 1.300" style="stroke-width:1.100"/><circle cx="52" cy="616" r="1.300"/>
<!-- explode -->
<path d="M46.500 656L55.500 647.500Q58.500 646.500 59.500 649Q60 651 58.500 652.500L49.500 661.500Q46.500 662.500 45.500 660Q45 658 46.500 656Z" fill="#e00000" stroke="#800000" stroke-width="1"/>
<path d="M48 657.500L56 650" stroke="#ff8080" stroke-width="1.200"/><path d="M46 660.500l3 1.600" stroke="#000" stroke-width="1.600"/>
<path class="s" d="M57.500 649L58.500 645.500" style="stroke-width:1.600"/><path d="M56.500 643.500l2.500 -1M60.500 642l2 -1.500M62 645.500l3 -0.500M60.500 648l1.500 2.500M63.500 650.500l2 0.500" stroke="#c00000" stroke-width="1.200"/>
</svg>
</body>
</html>
